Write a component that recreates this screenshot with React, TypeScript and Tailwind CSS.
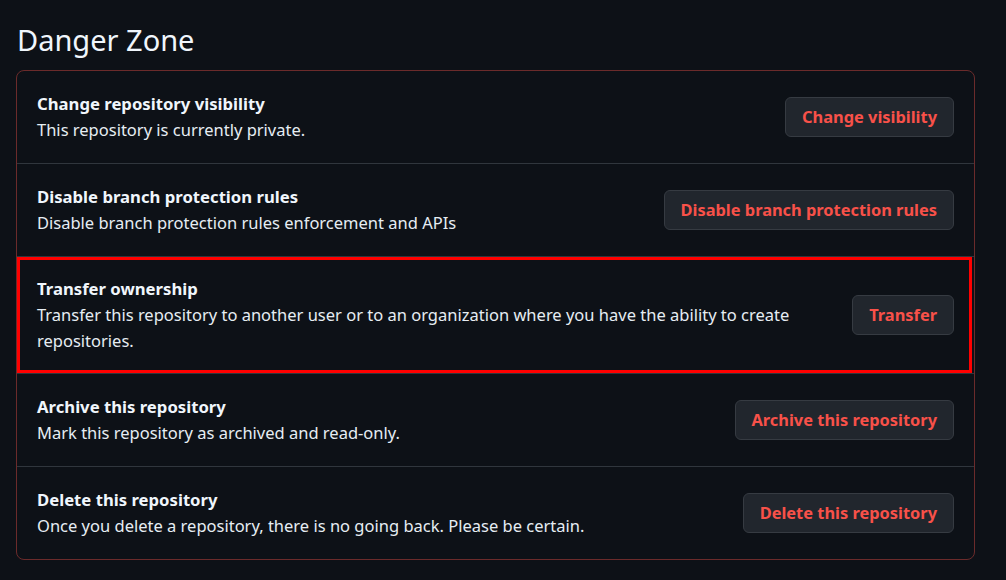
const rows = [
  {
    title: "Change repository visibility",
    desc: "This repository is currently private.",
    action: "Change visibility",
  },
  {
    title: "Disable branch protection rules",
    desc: "Disable branch protection rules enforcement and APIs",
    action: "Disable branch protection rules",
  },
  {
    title: "Transfer ownership",
    desc: "Transfer this repository to another user or to an organization where you have the ability to create repositories.",
    action: "Transfer",
    highlight: true,
  },
  {
    title: "Archive this repository",
    desc: "Mark this repository as archived and read-only.",
    action: "Archive this repository",
  },
  {
    title: "Delete this repository",
    desc: "Once you delete a repository, there is no going back. Please be certain.",
    action: "Delete this repository",
  },
];

export default function App() {
  return (
    <div
      className="min-h-screen bg-[#0d1117] text-[#e6edf3] pl-4 pr-[31px] pt-[22px]"
      style={{ fontFamily: "'Noto Sans', Lato, sans-serif" }}
    >
      <h2 className="text-[29px] leading-[36px] font-normal text-[#f0f6fc] pl-px mb-[12px]">
        Danger Zone
      </h2>
      <div className="border border-[#6b2b2b] rounded-lg">
        {rows.map((r, i) => (
          <div
            key={r.title}
            className={
              "relative flex items-center gap-4 px-5 " +
              (r.highlight ? "py-[19px] " : "py-5 ") +
              (i > 0 ? "border-t border-[#30363d]" : "")
            }
          >
            <div className="flex-1 min-w-0">
              <div className="text-[16.7px] leading-[26px] font-bold text-[#f0f6fc]">
                {r.title}
              </div>
              <div className="text-[16.5px] leading-[26px] text-[#e6edf3]">{r.desc}</div>
            </div>
            <button className="shrink-0 h-10 px-4 rounded-md bg-[#21262d] border border-[#363b42] text-[#f85149] text-[16.4px] font-bold">
              {r.action}
            </button>
            {r.highlight && (
              <div className="absolute left-0 right-[2px] top-0 bottom-0 border-[3px] border-[#ff0000] pointer-events-none" />
            )}
          </div>
        ))}
      </div>
    </div>
  );
}
